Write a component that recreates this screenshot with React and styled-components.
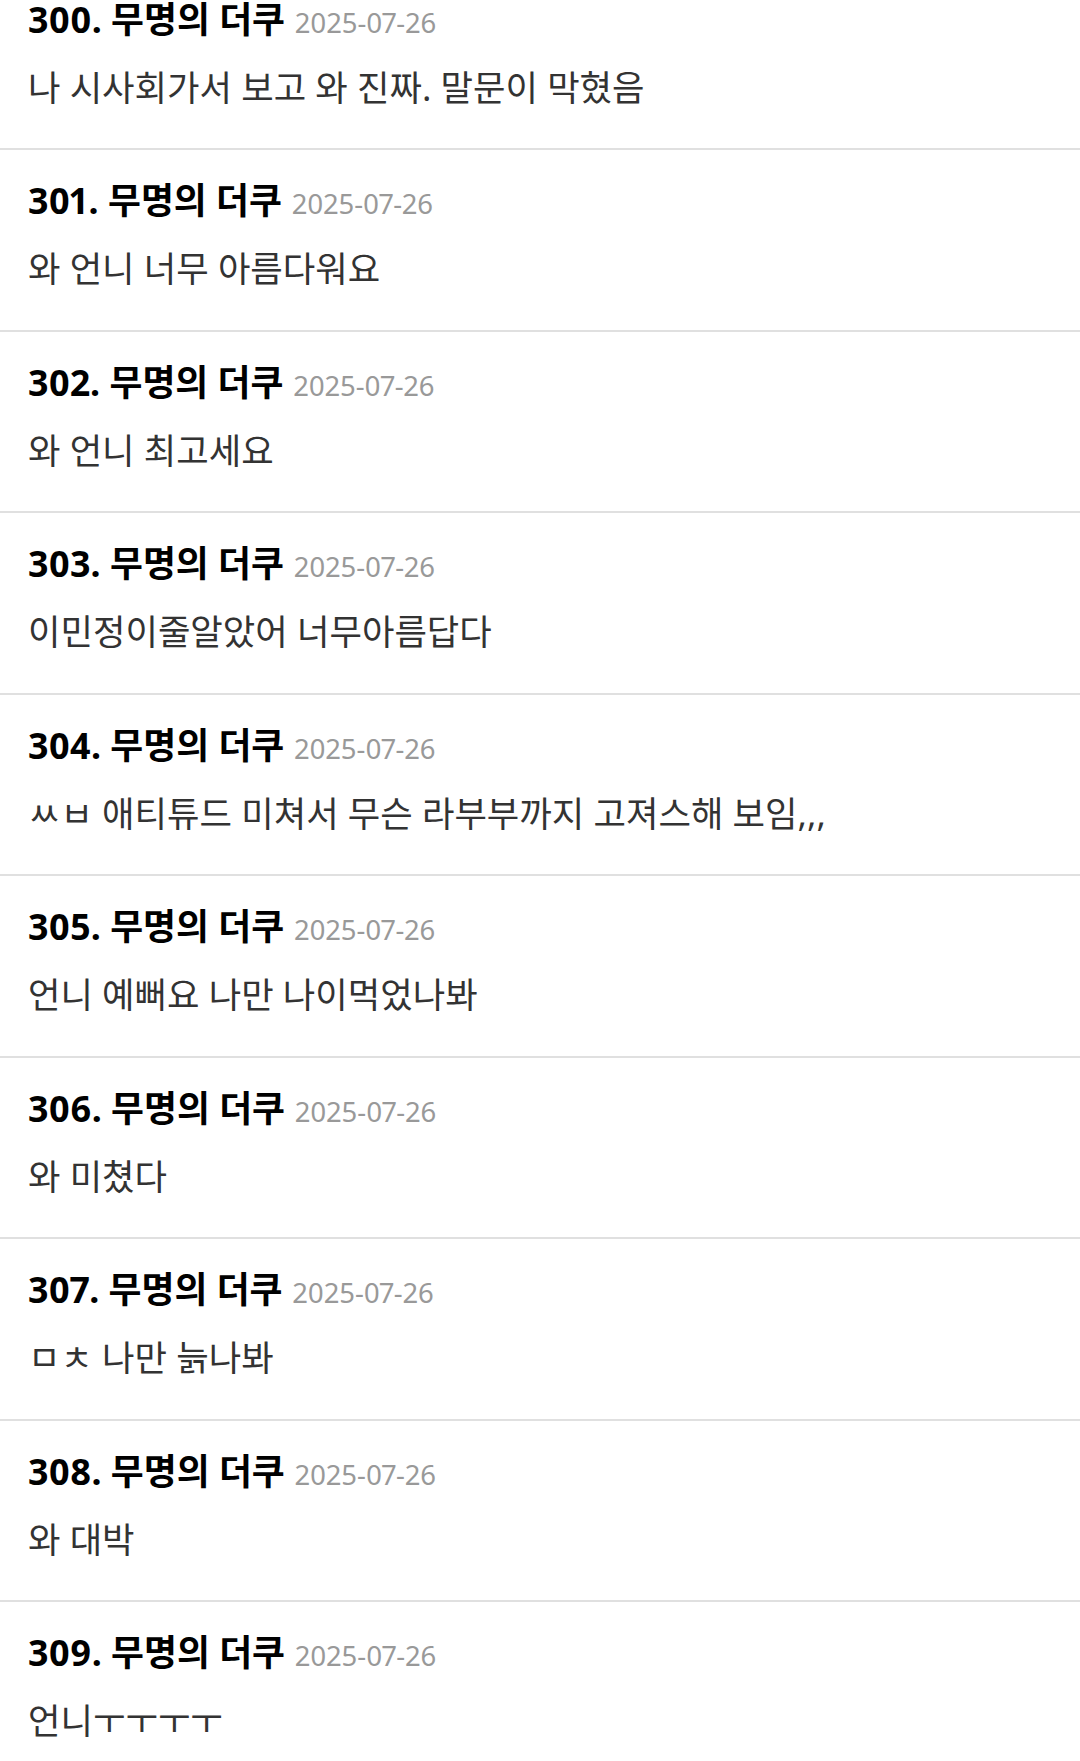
import React from "react";
import styled, { createGlobalStyle } from "styled-components";

const GlobalStyle = createGlobalStyle`
  html, body {
    margin: 0;
    padding: 0;
    background: #ffffff;
  }
  body {
    font-family: "Noto Sans", "Noto Sans CJK KR", sans-serif;
    -webkit-font-smoothing: antialiased;
  }
`;

const List = styled.ul`
  list-style: none;
  margin: -31.5px 0 0 0;
  padding: 0;
`;

const Item = styled.li`
  box-sizing: border-box;
  height: 181.5px;
  padding: 26px 28px 0 28px;
  border-bottom: 2px solid #e0e0e0;
`;

const Header = styled.div`
  display: flex;
  align-items: baseline;
  white-space: nowrap;
  font-variant-numeric: proportional-nums;
  font-feature-settings: "pnum" 1;
`;

const Author = styled.span`
  font-size: 35.8px;
  line-height: 48px;
  font-weight: 700;
  color: #000000;
`;

const DateText = styled.span`
  font-size: 27.5px;
  line-height: 1;
  font-weight: 400;
  color: #999999;
  margin-left: 10px;
`;

const Body = styled.p`
  margin: 18px 0 0 0;
  font-size: 35.3px;
  line-height: 52px;
  color: #333333;
  font-weight: 400;
  white-space: nowrap;
`;

const comments = [
  { no: 300, text: "나 시사회가서 보고 와 진짜. 말문이 막혔음" },
  { no: 301, text: "와 언니 너무 아름다워요" },
  { no: 302, text: "와 언니 최고세요" },
  { no: 303, text: "이민정이줄알았어 너무아름답다" },
  { no: 304, text: "ㅆㅂ 애티튜드 미쳐서 무슨 라부부까지 고져스해 보임,,," },
  { no: 305, text: "언니 예뻐요 나만 나이먹었나봐" },
  { no: 306, text: "와 미쳤다" },
  { no: 307, text: "ㅁㅊ 나만 늙나봐" },
  { no: 308, text: "와 대박" },
  { no: 309, text: "언니ㅜㅜㅜㅜ" },
];

export default function App() {
  return (
    <>
      <GlobalStyle />
      <List>
        {comments.map((c) => (
          <Item key={c.no}>
            <Header>
              <Author>{c.no}. 무명의 더쿠</Author>
              <DateText>2025-07-26</DateText>
            </Header>
            <Body>{c.text}</Body>
          </Item>
        ))}
      </List>
    </>
  );
}
